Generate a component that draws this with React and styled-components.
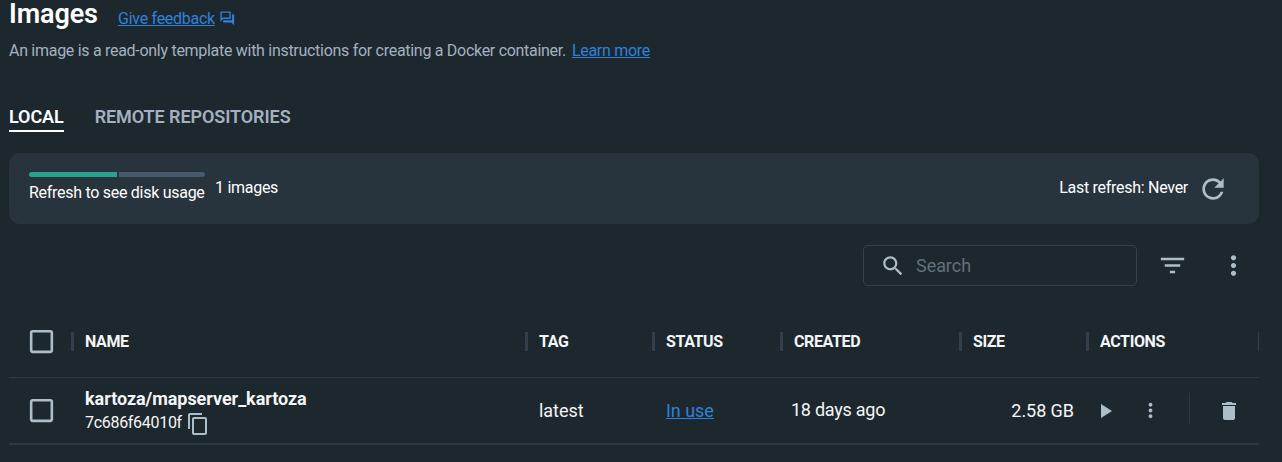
import React from 'react';
import styled, { createGlobalStyle } from 'styled-components';

const colors = {
  page: '#1d282e',
  panel: '#28343d',
  line: '#2d3940',
  tick: '#31404c',
  icon: '#adbecb',
  link: '#2f81dc',
  text: '#f4f5f6',
  muted: '#a3b1c0',
};

const GlobalStyle = createGlobalStyle`
  * { box-sizing: border-box; }
  body {
    margin: 0;
    background: ${colors.page};
    color: ${colors.text};
    font-family: Roboto, "Liberation Sans", sans-serif;
    overflow: hidden;
  }
`;

const paths = {
  feedback: 'M15 4v7H5.17l-.59.59-.58.58V4h11m1-2H3c-.55 0-1 .45-1 1v14l4-4h10c.55 0 1-.45 1-1V3c0-.55-.45-1-1-1zm5 4h-2v9H6v2c0 .55.45 1 1 1h11l4 4V7c0-.55-.45-1-1-1z',
  refresh: 'M17.65 6.35C16.2 4.9 14.21 4 12 4c-4.42 0-7.99 3.58-7.99 8s3.57 8 7.99 8c3.73 0 6.84-2.55 7.73-6h-2.08c-.82 2.33-3.04 4-5.65 4-3.31 0-6-2.69-6-6s2.69-6 6-6c1.66 0 3.14.69 4.22 1.78L13 11h7V4l-2.35 2.35z',
  search: 'M15.5 14h-.79l-.28-.27C15.41 12.59 16 11.11 16 9.5 16 5.91 13.09 3 9.5 3S3 5.91 3 9.5 5.91 16 9.5 16c1.61 0 3.09-.59 4.23-1.57l.27.28v.79l5 4.99L20.49 19l-4.99-5zm-6 0C7.01 14 5 11.99 5 9.5S7.01 5 9.5 5 14 7.01 14 9.5 11.99 14 9.5 14z',
  filter: 'M10 18h4v-2h-4v2zM3 6v2h18V6H3zm3 7h12v-2H6v2z',
  more: 'M12 8c1.1 0 2-.9 2-2s-.9-2-2-2-2 .9-2 2 .9 2 2 2zm0 2c-1.1 0-2 .9-2 2s.9 2 2 2 2-.9 2-2-.9-2-2-2zm0 6c-1.1 0-2 .9-2 2s.9 2 2 2 2-.9 2-2-.9-2-2-2z',
  checkbox: 'M19 5v14H5V5h14m0-2H5c-1.1 0-2 .9-2 2v14c0 1.1.9 2 2 2h14c1.1 0 2-.9 2-2V5c0-1.1-.9-2-2-2z',
  copy: 'M16 1H4c-1.1 0-2 .9-2 2v14h2V3h12V1zm3 4H8c-1.1 0-2 .9-2 2v14c0 1.1.9 2 2 2h11c1.1 0 2-.9 2-2V7c0-1.1-.9-2-2-2zm0 16H8V7h11v14z',
  play: 'M8 5v14l11-7z',
  trash: 'M6 19c0 1.1.9 2 2 2h8c1.1 0 2-.9 2-2V7H6v12zM19 4h-3.5l-1-1h-5l-1 1H5v2h14V4z',
};

const Svg = styled.svg`
  display: block;
  flex: none;
  width: ${(p) => p.$size}px;
  height: ${(p) => p.$size}px;
  fill: ${(p) => p.$color || colors.icon};
`;

const Icon = ({ name, size, color }) => (
  <Svg viewBox="0 0 24 24" $size={size} $color={color} aria-hidden="true">
    <path d={paths[name]} />
  </Svg>
);

const Page = styled.main`
  width: 1259px;
  height: 462px;
  padding-left: 9px;
`;

const Header = styled.header`
  display: flex;
  height: 36px;
`;

const Title = styled.h1`
  margin: 0;
  width: 109px;
  font-size: 27px;
  font-weight: 600;
  line-height: 29px;
  letter-spacing: -0.1px;
  color: #fff;
`;

const Link = styled.a`
  color: ${colors.link};
  text-decoration: underline;
  text-decoration-thickness: 1px;
  text-underline-offset: ${(p) => p.$offset || 2}px;
`;

const Feedback = styled.div`
  display: flex;
  align-items: center;
  gap: 4px;
  height: 36px;
  font-size: 16px;
  letter-spacing: -0.27px;
`;

const Intro = styled.p`
  display: flex;
  gap: 6px;
  margin: 0;
  height: 28px;
  font-size: 16px;
  line-height: 29px;
  letter-spacing: -0.29px;
  color: ${colors.muted};
`;

const Tabs = styled.nav`
  display: flex;
  gap: 31px;
  height: 68px;
  margin-top: 21px;
  padding-top: 20px;
`;

const Tab = styled.div`
  height: 27px;
  font-size: 18px;
  font-weight: 600;
  line-height: 24px;
  letter-spacing: -0.08px;
  white-space: nowrap;
  color: ${(p) => (p.$active ? '#fff' : colors.muted)};
  border-bottom: 2px solid ${(p) => (p.$active ? '#fff' : 'transparent')};
`;

const Panel = styled.section`
  display: flex;
  align-items: center;
  height: 71px;
  padding: 0 30px 0 20px;
  border-radius: 11px;
  background: ${colors.panel};
  font-size: 16px;
  letter-spacing: -0.28px;
  color: #fff;
`;

const Usage = styled.div`
  width: 176px;
  margin-right: 10px;
  padding-bottom: 3px;
  white-space: nowrap;
  line-height: 19px;
`;

const Meter = styled.div`
  display: grid;
  grid-template-columns: 88px 86px;
  gap: 2px;
  margin-bottom: 6px;
`;

const MeterPart = styled.div`
  height: 5px;
  background: ${(p) => (p.$filled ? '#2aa38e' : '#475a6c')};
  border-radius: ${(p) => (p.$filled ? '3px 0 0 3px' : '0 3px 3px 0')};
`;

const Count = styled.div`
  flex: 1;
  line-height: 20px;
  padding-bottom: 2px;
`;

const Refresh = styled.div`
  display: flex;
  align-items: center;
  gap: 9px;
`;

const RefreshText = styled.span`
  padding-bottom: 2px;
`;

const Toolbar = styled.div`
  display: flex;
  align-items: center;
  height: 81px;
  padding-top: 2px;
  justify-content: flex-end;
  padding-right: 10px;
`;

const SearchBox = styled.div`
  display: flex;
  align-items: center;
  gap: 10px;
  width: 274px;
  height: 41px;
  margin-right: 20px;
  padding-left: 16px;
  border: 1px solid #31414d;
  border-radius: 5px;
  font-size: 18px;
  letter-spacing: -0.05px;
  color: #61707b;
`;

const ToolSlot = styled.div`
  display: flex;
  justify-content: center;
  width: 31px;
  & + & { margin-left: 30px; }
`;

const columns = '62px 454px 127px 128px 179px 127px 173px';

const HeadRow = styled.div`
  display: grid;
  grid-template-columns: ${columns};
  align-items: center;
  height: 73px;
  border-bottom: 1px solid ${colors.line};
`;

const HeadCell = styled.div`
  display: flex;
  align-items: center;
  height: 19px;
  padding-left: 11px;
  font-size: 16px;
  font-weight: 700;
  letter-spacing: -0.38px;
  border-left: 3px solid ${colors.tick};
  border-right: ${(p) => (p.$last ? `1px solid ${colors.tick}` : '0')};
`;

const CheckCell = styled.div`
  padding-left: 17px;
`;

const BodyRow = styled.div`
  display: grid;
  grid-template-columns: ${columns};
  align-items: center;
  height: 67px;
  border-bottom: 2px solid ${colors.line};
  font-size: 18px;
`;

const Cell = styled.div`
  padding-left: ${(p) => p.$pad || 14}px;
  padding-right: ${(p) => p.$end || 0}px;
  padding-bottom: ${(p) => p.$lift || 0}px;
  text-align: ${(p) => (p.$end ? 'right' : 'left')};
  letter-spacing: ${(p) => (p.$tight ? '-0.25px' : '-0.05px')};
  white-space: nowrap;
`;

const ImageName = styled.div`
  font-weight: 700;
  line-height: 24px;
`;

const ImageId = styled.div`
  display: flex;
  align-items: center;
  gap: 4px;
  height: 24px;
  font-size: 16px;
  letter-spacing: -0.3px;
  svg { margin-top: 3px; }
`;

const Actions = styled.div`
  display: flex;
  align-items: center;
  padding-left: 7px;
`;

const Kebab = styled.div`
  margin-left: 22px;
`;

const Remove = styled.div`
  display: flex;
  align-items: center;
  height: 31px;
  margin-left: 27px;
  margin-bottom: 5px;
  padding: 5px 0 0 27px;
  border-left: 1px solid ${colors.line};
`;

const headings = ['NAME', 'TAG', 'STATUS', 'CREATED', 'SIZE', 'ACTIONS'];

export default function App() {
  return (
    <>
      <GlobalStyle />
      <Page>
        <Header>
          <Title>Images</Title>
          <Feedback>
            <Link $offset={1}>Give feedback</Link>
            <Icon name="feedback" size={16.5} color={colors.link} />
          </Feedback>
        </Header>
        <Intro>
          <span>An image is a read-only template with instructions for creating a Docker container.</span>
          <Link $offset={1}>Learn more</Link>
        </Intro>
        <Tabs>
          <Tab $active>LOCAL</Tab>
          <Tab>REMOTE REPOSITORIES</Tab>
        </Tabs>
        <Panel>
          <Usage>
            <Meter>
              <MeterPart $filled />
              <MeterPart />
            </Meter>
            Refresh to see disk usage
          </Usage>
          <Count>1 images</Count>
          <Refresh>
            <RefreshText>Last refresh: Never</RefreshText>
            <Icon name="refresh" size={32} />
          </Refresh>
        </Panel>
        <Toolbar>
          <SearchBox>
            <Icon name="search" size={26} />
            <span>Search</span>
          </SearchBox>
          <ToolSlot><Icon name="filter" size={31} /></ToolSlot>
          <ToolSlot><Icon name="more" size={31} /></ToolSlot>
        </Toolbar>
        <HeadRow>
          <CheckCell><Icon name="checkbox" size={31} /></CheckCell>
          {headings.map((h, i) => (
            <HeadCell key={h} $last={i === headings.length - 1}>{h}</HeadCell>
          ))}
        </HeadRow>
        <BodyRow>
          <CheckCell><Icon name="checkbox" size={31} /></CheckCell>
          <Cell>
            <ImageName>kartoza/mapserver_kartoza</ImageName>
            <ImageId>
              <span>7c686f64010f</span>
              <Icon name="copy" size={24} />
            </ImageId>
          </Cell>
          <Cell>latest</Cell>
          <Cell>
            <Link $offset={1}>In use</Link>
          </Cell>
          <Cell $pad={11} $lift={2} $tight>18 days ago</Cell>
          <Cell $end={12}>2.58 GB</Cell>
          <Actions>
            <Icon name="play" size={24} />
            <Kebab><Icon name="more" size={23} /></Kebab>
            <Remove><Icon name="trash" size={24} /></Remove>
          </Actions>
        </BodyRow>
      </Page>
    </>
  );
}
